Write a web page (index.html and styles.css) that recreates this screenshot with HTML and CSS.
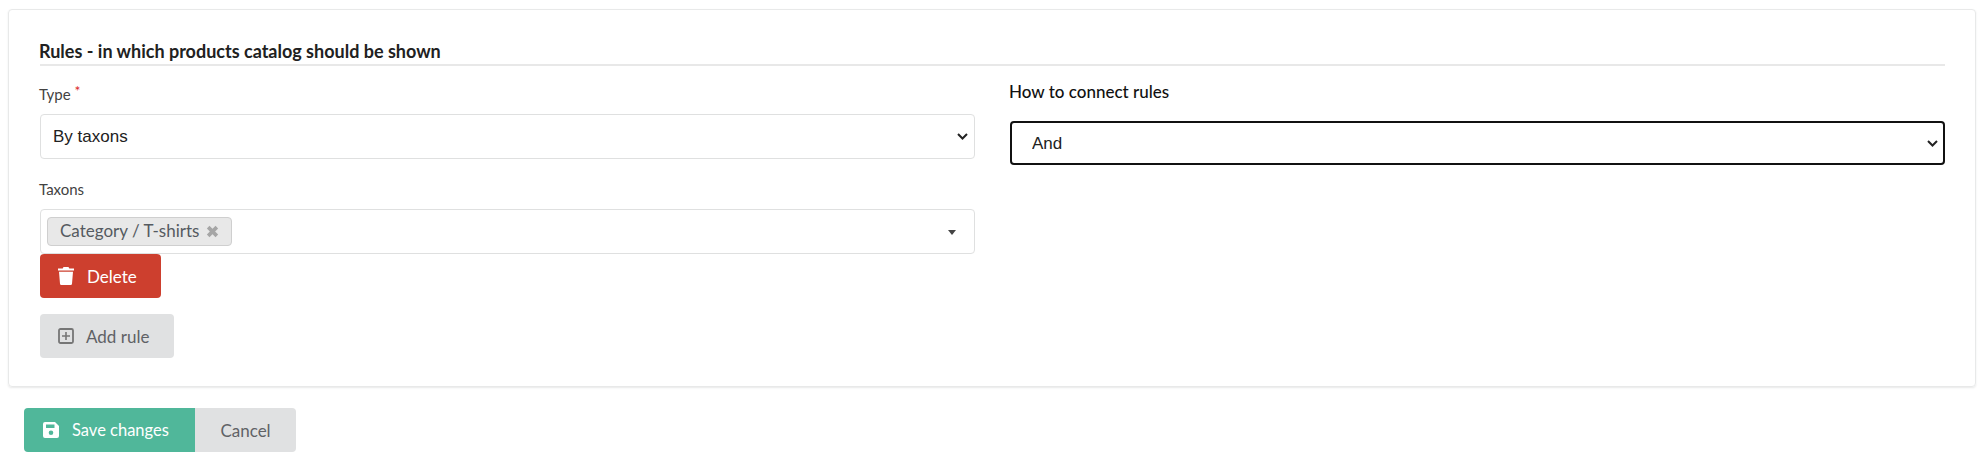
FILE: index.html
```html
<!DOCTYPE html>
<html lang="en">
<head>
<meta charset="utf-8">
<title>Rules</title>
<link rel="stylesheet" href="styles.css">
</head>
<body>
<section class="card">
  <h4 class="heading">Rules - in which products catalog should be shown</h4>
  <div class="columns">
    <div class="column main">
      <div class="rule">
        <div class="field">
          <label class="label">Type <span class="req">*</span></label>
          <select class="select"><option>By taxons</option></select>
        </div>
        <div class="field">
          <label class="label">Taxons</label>
          <div class="multi">
            <span class="tag">Category / T-shirts
              <svg class="tag-x" viewBox="0 0 12 12"><path d="M2 2l8 8M10 2l-8 8" stroke="#a6a6a6" stroke-width="3.400" fill="none"/></svg>
            </span>
            <span class="caret"></span>
          </div>
        </div>
        <button class="btn red" type="button">
          <svg class="ico" viewBox="0 0 16 18"><path fill="#fff" d="M5.500 0h5l.8 1.600H16v2H0v-2h4.700zM1 4.800h14l-1 12a1.300 1.300 0 0 1-1.300 1.200H3.300A1.300 1.300 0 0 1 2 16.800z"/></svg>
          Delete
        </button>
      </div>
      <button class="btn grey add" type="button">
        <svg class="ico" viewBox="0 0 16 16"><rect x="1" y="1" width="14" height="14" rx="1.500" fill="none" stroke="#767676" stroke-width="1.800"/><path d="M8 4v8M4 8h8" stroke="#767676" stroke-width="1.600"/></svg>
        Add rule
      </button>
    </div>
    <div class="column side">
      <label class="label strong">How to connect rules</label>
      <select class="select focus"><option>And</option></select>
    </div>
  </div>
</section>
<div class="actions">
  <button class="btn green" type="button">
    <svg class="ico" viewBox="0 0 16 16"><path fill="#fff" fill-rule="evenodd" d="M2 0h10l4 4v10a2 2 0 0 1-2 2H2a2 2 0 0 1-2-2V2a2 2 0 0 1 2-2zM3 2.500v3.500h8.500V2.500zM8 8.500a2.300 2.300 0 1 0 0 4.600 2.300 2.300 0 0 0 0-4.600z"/></svg>
    Save changes
  </button>
  <button class="btn grey cancel" type="button">Cancel</button>
</div>
</body>
</html>
```
FILE: styles.css
```css
* { box-sizing: border-box; }

html, body { margin: 0; background: #fff; }

body {
  padding: 9px 8px 0;
  font-family: Lato, "Open Sans", sans-serif;
  font-size: 15px;
  line-height: 1.4285;
  color: rgba(0, 0, 0, .87);
}

.card {
  height: 378px;
  padding: 30px 30px 0 31px;
  border: 1px solid #e8e9e9;
  border-radius: 4px;
  box-shadow: 0 1px 2px rgba(34, 36, 38, .1);
}

.heading {
  margin: 0 0 16px;
  height: 26px;
  border-bottom: 2px solid #e8e8e8;
  font-size: 18px;
  line-height: 22px;
  font-weight: 700;
  color: #212121;
  text-indent: -1px;
}

.columns {
  display: grid;
  grid-template-columns: 935px 935px;
  gap: 35px;
}

.main { padding-top: 2px; }

.field + .field { margin-top: 20px; }

.label {
  display: block;
  height: 20px;
  margin-bottom: 10px;
  font-size: 15px;
  line-height: 20px;
  color: #424242;
  text-indent: -1px;
}

.req {
  position: relative;
  top: -4px;
  font-size: 14px;
  color: #db2828;
}

.label.strong {
  margin-bottom: 19px;
  font-size: 17px;
  font-weight: 500;
  color: #111;
}

.select {
  display: block;
  width: 100%;
  height: 45px;
  padding: 0 12px;
  border: 1px solid #dfe0e0;
  border-radius: 4px;
  appearance: none;
  background: #fff url("data:image/svg+xml,%3Csvg xmlns='http://www.w3.org/2000/svg' viewBox='0 0 11 7'%3E%3Cpath d='M1 1l4.500 4.500L10 1' fill='none' stroke='%23222' stroke-width='2'/%3E%3C/svg%3E") no-repeat right 6px center / 11px 7px;
  font-family: "Liberation Sans", Arial, sans-serif;
  font-size: 17px;
  color: #212121;
}

.select.focus {
  height: 44px;
  padding: 0 20px;
  border: 2px solid #111;
  background-position: right 5px center;
}

.multi {
  display: flex;
  align-items: center;
  position: relative;
  height: 45px;
  padding: 0 6px;
  border: 1px solid #dfe0e0;
  border-radius: 4px;
  background: #fff;
}

.tag {
  display: inline-flex;
  align-items: center;
  height: 29px;
  padding: 0 12px;
  border-radius: 4px;
  border: 1px solid #cfcfcf;
  background: #e8e8e8;
  font-size: 17px;
  color: #555a60;
}

.tag-x { width: 13px; height: 13px; margin-left: 7px; }

.caret {
  position: absolute;
  right: 18px;
  top: 20px;
  border: 4px solid transparent;
  border-top: 5px solid #444;
  border-bottom: 0;
}

.btn {
  display: inline-flex;
  align-items: center;
  height: 44px;
  padding: 0 12px 0 18px;
  border: 0;
  border-radius: 4px;
  font-family: Lato, sans-serif;
  font-size: 17px;
  font-weight: 400;
  white-space: nowrap;
  cursor: pointer;
}

.ico { width: 16px; height: 16px; margin-right: 13px; flex: none; }

.red { width: 121px; background: #cd3f2e; color: #fff; }

.red .ico { height: 18px; }

.grey { background: #e0e1e2; color: #5f6266; }

.add { display: flex; width: 134px; margin-top: 16px; }

.add .ico { margin-right: 12px; }

.green {
  width: 171px;
  padding-left: 19px;
  border-radius: 4px 0 0 4px;
  background: #50b79a;
  color: #fff;
  font-size: 16.500px;
}

.cancel {
  width: 101px;
  justify-content: center;
  padding: 0;
  border-radius: 0 4px 4px 0;
}

.actions {
  display: flex;
  margin: 21px 0 0 16px;
}
```
